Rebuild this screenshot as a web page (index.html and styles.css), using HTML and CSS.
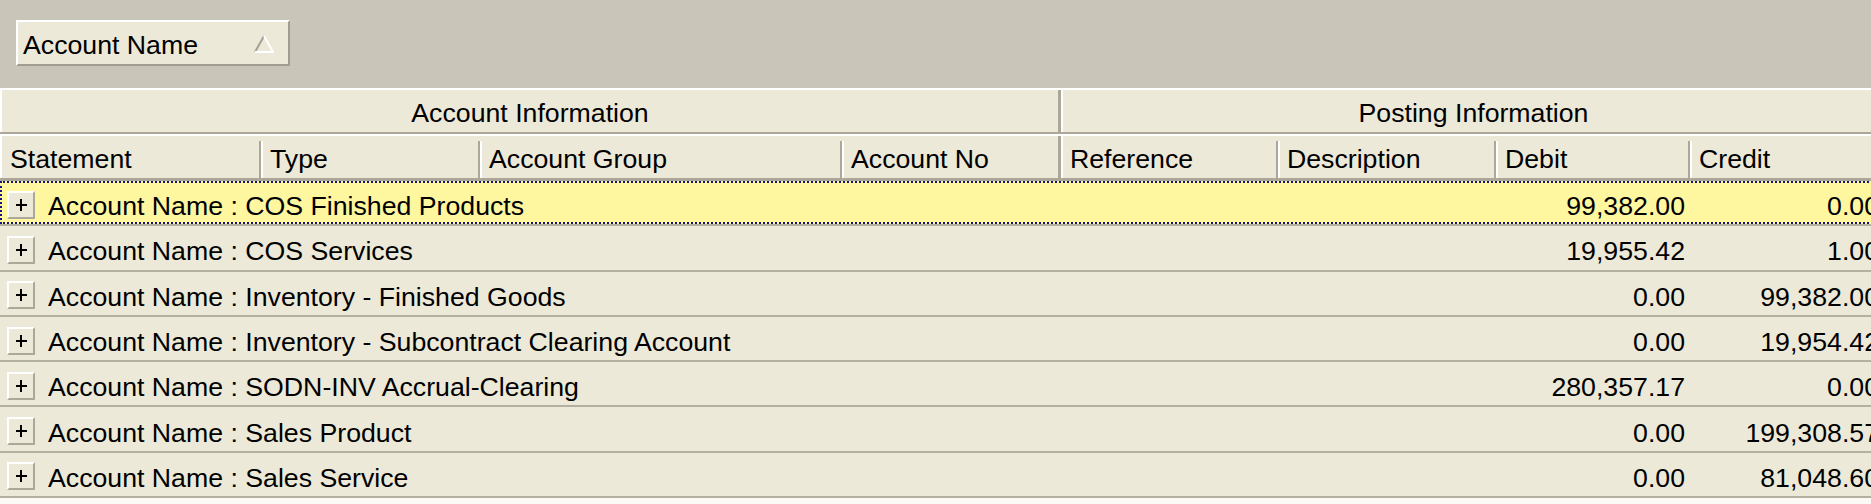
FILE: index.html
```html
<!DOCTYPE html>
<html>
<head>
<meta charset="utf-8">
<title>Accounts Grid</title>
<link rel="stylesheet" href="styles.css">
</head>
<body>
<div class="grid">
  <div class="group-panel">
    <div class="group-btn">
      <span class="group-btn-label">Account Name</span>
      <svg class="sort-glyph" width="20" height="18" viewBox="0 0 20 18">
        <path d="M1 17 L10 1" stroke="#a3a091" stroke-width="2" fill="none"/>
        <path d="M10 1 L19 17 L1 17" stroke="#ffffff" stroke-width="2" fill="none"/>
      </svg>
    </div>
  </div>

  <div class="bands">
    <div class="band band-account">Account Information</div>
    <div class="band band-posting">Posting Information</div>
  </div>

  <div class="columns">
    <div class="col col-first">Statement</div>
    <div class="col">Type</div>
    <div class="col">Account Group</div>
    <div class="col col-band-end">Account No</div>
    <div class="col col-band-start">Reference</div>
    <div class="col">Description</div>
    <div class="col">Debit</div>
    <div class="col">Credit</div>
  </div>

  <div class="rows">
    <div class="row row-focused"><div class="row-cells">
      <div class="row-label"><span class="expand"></span><span class="row-text">Account Name : COS Finished Products</span></div>
      <div class="num">99,382.00</div><div class="num">0.00</div>
    </div></div>
    <div class="row"><div class="row-cells">
      <div class="row-label"><span class="expand"></span><span class="row-text">Account Name : COS Services</span></div>
      <div class="num">19,955.42</div><div class="num">1.00</div>
    </div></div>
    <div class="row"><div class="row-cells">
      <div class="row-label"><span class="expand"></span><span class="row-text">Account Name : Inventory - Finished Goods</span></div>
      <div class="num">0.00</div><div class="num">99,382.00</div>
    </div></div>
    <div class="row"><div class="row-cells">
      <div class="row-label"><span class="expand"></span><span class="row-text">Account Name : Inventory - Subcontract Clearing Account</span></div>
      <div class="num">0.00</div><div class="num">19,954.42</div>
    </div></div>
    <div class="row"><div class="row-cells">
      <div class="row-label"><span class="expand"></span><span class="row-text">Account Name : SODN-INV Accrual-Clearing</span></div>
      <div class="num">280,357.17</div><div class="num">0.00</div>
    </div></div>
    <div class="row"><div class="row-cells">
      <div class="row-label"><span class="expand"></span><span class="row-text">Account Name : Sales Product</span></div>
      <div class="num">0.00</div><div class="num">199,308.57</div>
    </div></div>
    <div class="row"><div class="row-cells">
      <div class="row-label"><span class="expand"></span><span class="row-text">Account Name : Sales Service</span></div>
      <div class="num">0.00</div><div class="num">81,048.60</div>
    </div></div>
  </div>
</div>
</body>
</html>
```

FILE: styles.css
```css
html, body {
  margin: 0;
  padding: 0;
  overflow: hidden;
}

body {
  width: 1871px;
  height: 504px;
  background: #fbfaf4;
  font-family: "Liberation Sans", Arial, sans-serif;
  font-size: 26.7px;
  color: #000;
}

.grid {
  width: 1884px;
}

/* group-by panel */
.group-panel {
  height: 88px;
  box-sizing: border-box;
  padding: 20px 0 0 16px;
  background: #c9c6b9;
}

.group-btn {
  width: 274px;
  height: 46px;
  box-sizing: border-box;
  border: 2px solid;
  border-color: #ffffff #a19e8f #a19e8f #ffffff;
  background: #ece9d8;
  display: flex;
  align-items: center;
  padding-left: 5px;
  padding-right: 14px;
}

.group-btn-label {
  padding-top: 4px;
}

.sort-glyph {
  margin-left: auto;
  margin-top: 2px;
  display: block;
}

/* band headers */
.bands {
  display: grid;
  grid-template-columns: 1061px 823px;
  height: 46px;
  box-sizing: border-box;
  border-top: 2px solid #ffffff;
  border-bottom: 2px solid #aca899;
  background: #ece9d8;
}

.band {
  display: flex;
  align-items: center;
  justify-content: center;
  box-sizing: border-box;
  padding-top: 4px;
}

.band-account {
  border-left: 2px solid #ffffff;
  border-right: 3px solid #aca899;
}

.band-posting {
  border-left: 2px solid #ffffff;
}

/* column headers */
.columns {
  display: grid;
  grid-template-columns: 261px 219px 362px 219px 217px 218px 194px 194px;
  height: 47px;
  box-sizing: border-box;
  border-top: 2px solid #ffffff;
  border-bottom: 3px solid #aca899;
  background: #ece9d8;
}

.col {
  display: flex;
  align-items: center;
  padding-left: 9px;
  padding-top: 4px;
  box-sizing: border-box;
  white-space: nowrap;
  background:
    linear-gradient(#ffffff, #ffffff) left 0 top 5px / 2px calc(100% - 5px) no-repeat,
    linear-gradient(#aca899, #aca899) right 0 top 5px / 2px calc(100% - 5px) no-repeat,
    #ece9d8;
}

.col-first {
  padding-left: 10px;
  background:
    linear-gradient(#ffffff, #ffffff) left 0 top 0 / 2px 100% no-repeat,
    linear-gradient(#aca899, #aca899) right 0 top 5px / 2px calc(100% - 5px) no-repeat,
    #ece9d8;
}

.col-band-end {
  background:
    linear-gradient(#ffffff, #ffffff) left 0 top 5px / 2px calc(100% - 5px) no-repeat,
    linear-gradient(#aca899, #aca899) right 0 top 0 / 3px 100% no-repeat,
    #ece9d8;
}

.col-band-start {
  background:
    linear-gradient(#ffffff, #ffffff) left 0 top 0 / 2px 100% no-repeat,
    linear-gradient(#aca899, #aca899) right 0 top 5px / 2px calc(100% - 5px) no-repeat,
    #ece9d8;
}

/* group rows */
.row {
  height: 45.3px;
  box-sizing: border-box;
  border-bottom: 2px solid #b3b0a1;
  background: #ece9d8;
}

.row-cells {
  height: 100%;
  box-sizing: border-box;
  padding-top: 4px;
  display: grid;
  grid-template-columns: 1496px 194px 194px;
  align-items: center;
}

.row-focused {
  background: #fff6a0;
}

.row-focused .row-cells {
  outline: 2px dotted #14147c;
  outline-offset: -2px;
}

.row-label {
  display: flex;
  align-items: center;
  padding-left: 7px;
  white-space: nowrap;
}

.row-text {
  padding-top: 4px;
}

.expand {
  width: 28px;
  height: 28px;
  box-sizing: border-box;
  margin-right: 13px;
  flex: none;
  border: 2px solid;
  border-color: #ffffff #aca899 #aca899 #ffffff;
  background:
    linear-gradient(#000, #000) center / 11px 2px no-repeat,
    linear-gradient(#000, #000) center / 2px 12px no-repeat,
    #ece9d8;
}

.num {
  text-align: right;
  padding-right: 5px;
  padding-top: 4px;
  white-space: nowrap;
}
```
